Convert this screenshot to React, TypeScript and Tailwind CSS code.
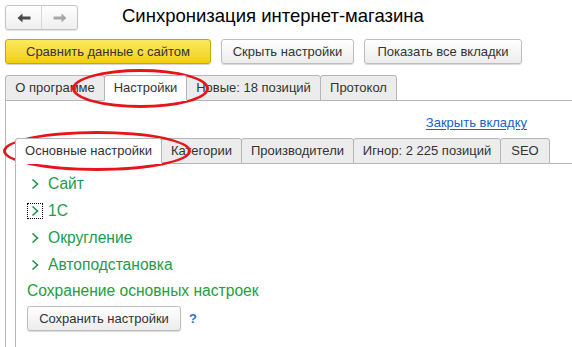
import React from 'react'

const outerTabs = [
  { label: 'О программе', w: 'w-[100px]' },
  { label: 'Настройки', w: 'w-[83px]', active: true },
  { label: 'Новые: 18 позиций', w: 'w-[135px]' },
  { label: 'Протокол', w: 'w-[77px]' },
]

const innerTabs = [
  { label: 'Основные настройки', w: 'w-[147px]', active: true },
  { label: 'Категории', w: 'w-[81px]' },
  { label: 'Производители', w: 'w-[113px]' },
  { label: 'Игнор: 2 225 позиций', w: 'w-[148px]' },
  { label: 'SEO', w: 'w-[50px]' },
]

const groups = ['Сайт', '1С', 'Округление', 'Автоподстановка']

function Chevron() {
  return (
    <svg width="8" height="12" viewBox="0 0 8 12" className="shrink-0">
      <path d="M1.5 1.5 L6.5 6 L1.5 10.5" fill="none" stroke="#1d8f4a" strokeWidth="1.6" />
    </svg>
  )
}

function Tab({ label, w, active }: { label: string; w: string; active?: boolean }) {
  return (
    <div
      className={
        'h-[26px] flex items-center justify-center text-[13px] text-[#333] border border-[#b5b5b5] rounded-t-[3px] -ml-px first:ml-0 ' +
        w +
        (active ? ' bg-white border-b-white relative z-10' : ' bg-[#ececec]')
      }
    >
      {label}
    </div>
  )
}

function Btn({ children, w }: { children: React.ReactNode; w: string }) {
  return (
    <div
      className={
        'h-[25px] flex items-center justify-center text-[13px] text-[#333] border border-[#bdbdbd] rounded-[3px] bg-gradient-to-b from-white to-[#ececec] shadow-[0_1px_1px_rgba(0,0,0,0.15)] ' +
        w
      }
    >
      {children}
    </div>
  )
}

export default function App() {
  return (
    <div className="relative w-[572px] h-[347px] bg-white overflow-hidden font-['Liberation_Sans',Arial,sans-serif]">
      {/* header */}
      <div className="flex items-center pt-[5px] pl-[5px]">
        <div className="flex h-[25px] w-[73px] border border-[#c4c4c4] rounded-[3px] bg-gradient-to-b from-white to-[#efefef] shadow-[0_1px_1px_rgba(0,0,0,0.12)]">
          <div className="w-[36px] flex items-center justify-center border-r border-[#d8d8d8]">
            <svg width="14" height="10" viewBox="0 0 14 10">
              <path d="M0.5 5 L5.5 0.5 V3.6 H13.5 V6.4 H5.5 V9.5 Z" fill="#4a4a4a" />
            </svg>
          </div>
          <div className="flex-1 flex items-center justify-center">
            <svg width="14" height="10" viewBox="0 0 14 10">
              <path d="M13.5 5 L8.5 0.5 V3.6 H0.5 V6.4 H8.5 V9.5 Z" fill="#a8a8a8" />
            </svg>
          </div>
        </div>
        <div className="ml-[44px] text-[18.5px] text-black leading-none -mt-[3px]">Синхронизация интернет-магазина</div>
      </div>

      {/* command bar */}
      <div className="flex gap-[10px] mt-[9px] ml-[5px]">
        <div className="h-[25px] w-[206px] flex items-center justify-center text-[13px] text-[#333] border border-[#c7a800] rounded-[3px] bg-gradient-to-b from-[#fcea5a] to-[#f1cf00] shadow-[0_1px_1px_rgba(0,0,0,0.18)]">
          Сравнить данные с сайтом
        </div>
        <Btn w="w-[133px]">Скрыть настройки</Btn>
        <Btn w="w-[158px]">Показать все вкладки</Btn>
      </div>

      {/* outer tabs */}
      <div className="flex items-end mt-[11px] ml-[5px]">
        {outerTabs.map((t) => (
          <Tab key={t.label} {...t} />
        ))}
        <div className="flex-1 border-b border-[#b5b5b5]" />
      </div>

      {/* outer page */}
      <div className="-mt-px ml-[5px] border-l border-t border-[#b5b5b5] h-[260px] pl-[9px]">
        <div className="flex justify-end pr-[45px] pt-[12px] h-[37px]">
          <span className="text-[13px] text-[#1b5fc6] underline underline-offset-2">Закрыть вкладку</span>
        </div>

        <div className="flex items-end">
          {innerTabs.map((t) => (
            <Tab key={t.label} {...t} />
          ))}
          <div className="flex-1 border-b border-[#b5b5b5]" />
        </div>

        <div className="-mt-px border-l border-t border-t-transparent border-[#b5b5b5] h-[200px] pl-[11px] pt-[6px]">
          <div className="flex flex-col">
            {groups.map((g, i) => (
              <div key={g} className="h-[27px] flex items-center gap-[5px]">
                <span
                  className={
                    'flex items-center justify-center w-[16px] h-[16px] ' +
                    (i === 1 ? 'outline outline-1 outline-dotted outline-black -outline-offset-1' : '')
                  }
                >
                  <Chevron />
                </span>
                <span className="text-[15.6px] text-[#1d9a4e]">{g}</span>
              </div>
            ))}
          </div>
          <div className="text-[15.6px] text-[#22a03c] leading-[20px] mt-[3px]">Сохранение основных настроек</div>
          <div className="flex items-center mt-[5px] gap-[8px]">
            <Btn w="w-[154px]">Сохранить настройки</Btn>
            <span className="text-[13px] text-[#2a6fd0] font-bold">?</span>
          </div>
        </div>
      </div>

      {/* red annotation ellipses */}
      <div className="absolute left-[72px] top-[69px] w-[137px] h-[39px] rounded-[50%] border-[3px] border-[#e8141b]" />
      <div className="absolute left-[3px] top-[131px] w-[188px] h-[40px] rounded-[50%] border-[3px] border-[#e8141b]" />
    </div>
  )
}
